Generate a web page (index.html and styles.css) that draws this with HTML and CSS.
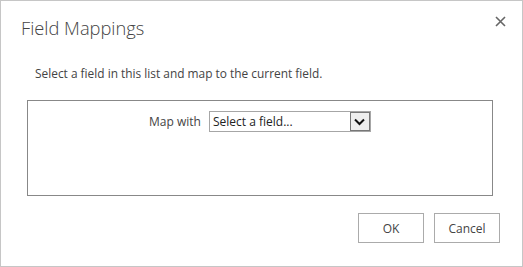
FILE: index.html
```html
<!DOCTYPE html>
<html lang="en">
<head>
  <meta charset="UTF-8">
  <title>Field Mappings</title>
  <link rel="stylesheet" href="styles.css">
</head>
<body>
  <div class="dialog">
    <div class="dialog-header">
      <h1 class="dialog-title">Field Mappings</h1>
      <span class="dialog-close">
        <svg width="11" height="11" viewBox="0 0 11 11"><path d="M1 1 L10 10 M10 1 L1 10" stroke="#666" stroke-width="1.6" fill="none"/></svg>
      </span>
    </div>
    <p class="intro">Select a field in this list and map to the current field.</p>
    <div class="mapbox">
      <div class="maprow">
        <span class="maplabel">Map with</span>
        <div class="select">
          <span class="select-text">Select a field...</span>
          <span class="select-arrow">
            <svg width="11" height="8" viewBox="0 0 11 8"><path d="M1 1.5 L5.5 6 L10 1.5" stroke="#111" stroke-width="2" fill="none"/></svg>
          </span>
        </div>
      </div>
    </div>
    <div class="actions">
      <button class="btn">OK</button>
      <button class="btn">Cancel</button>
    </div>
  </div>
</body>
</html>
```

FILE: styles.css
```css
body {
  margin: 0;
  font-family: "Open Sans", "Noto Sans", sans-serif;
  color: #444;
  background: #fff;
}
.dialog {
  width: 523px;
  height: 267px;
  box-sizing: border-box;
  border: 1px solid #c6c6c6;
  display: flex;
  flex-direction: column;
}
.dialog-header {
  display: flex;
  justify-content: space-between;
  align-items: flex-start;
  padding: 14px 16px 0 20px;
}
.dialog-title {
  margin: 0;
  font-weight: 300;
  font-size: 18.3px;
  line-height: 26px;
  color: #444;
}
.dialog-close {
  margin-top: 1px;
  display: flex;
}
.intro {
  margin: 23px 0 0 34px;
  font-size: 11.9px;
  line-height: 18px;
  color: #444;
}
.mapbox {
  margin: 18px 29px 0 26px;
  height: 94px;
  border: 1px solid #888;
}
.maprow {
  display: flex;
  justify-content: center;
  align-items: center;
  gap: 8px;
  margin-top: 10px;
}
.maplabel {
  font-size: 12px;
}
.select {
  width: 162px;
  height: 21px;
  border: 1px solid #a6a6a6;
  box-sizing: border-box;
  display: flex;
  align-items: center;
  justify-content: space-between;
}
.select-text {
  font-size: 12px;
  color: #222;
  padding-left: 3px;
}
.select-arrow {
  width: 20px;
  height: 19px;
  box-sizing: border-box;
  border: 1px solid #777;
  background: #eee;
  display: flex;
  align-items: center;
  justify-content: center;
}
.actions {
  display: flex;
  justify-content: flex-end;
  gap: 10px;
  margin: 17px 22px 0 0;
}
.btn {
  width: 66px;
  height: 30px;
  border: 1px solid #ababab;
  background: #fff;
  font-family: inherit;
  font-size: 12px;
  color: #444;
  padding: 0;
}
```
